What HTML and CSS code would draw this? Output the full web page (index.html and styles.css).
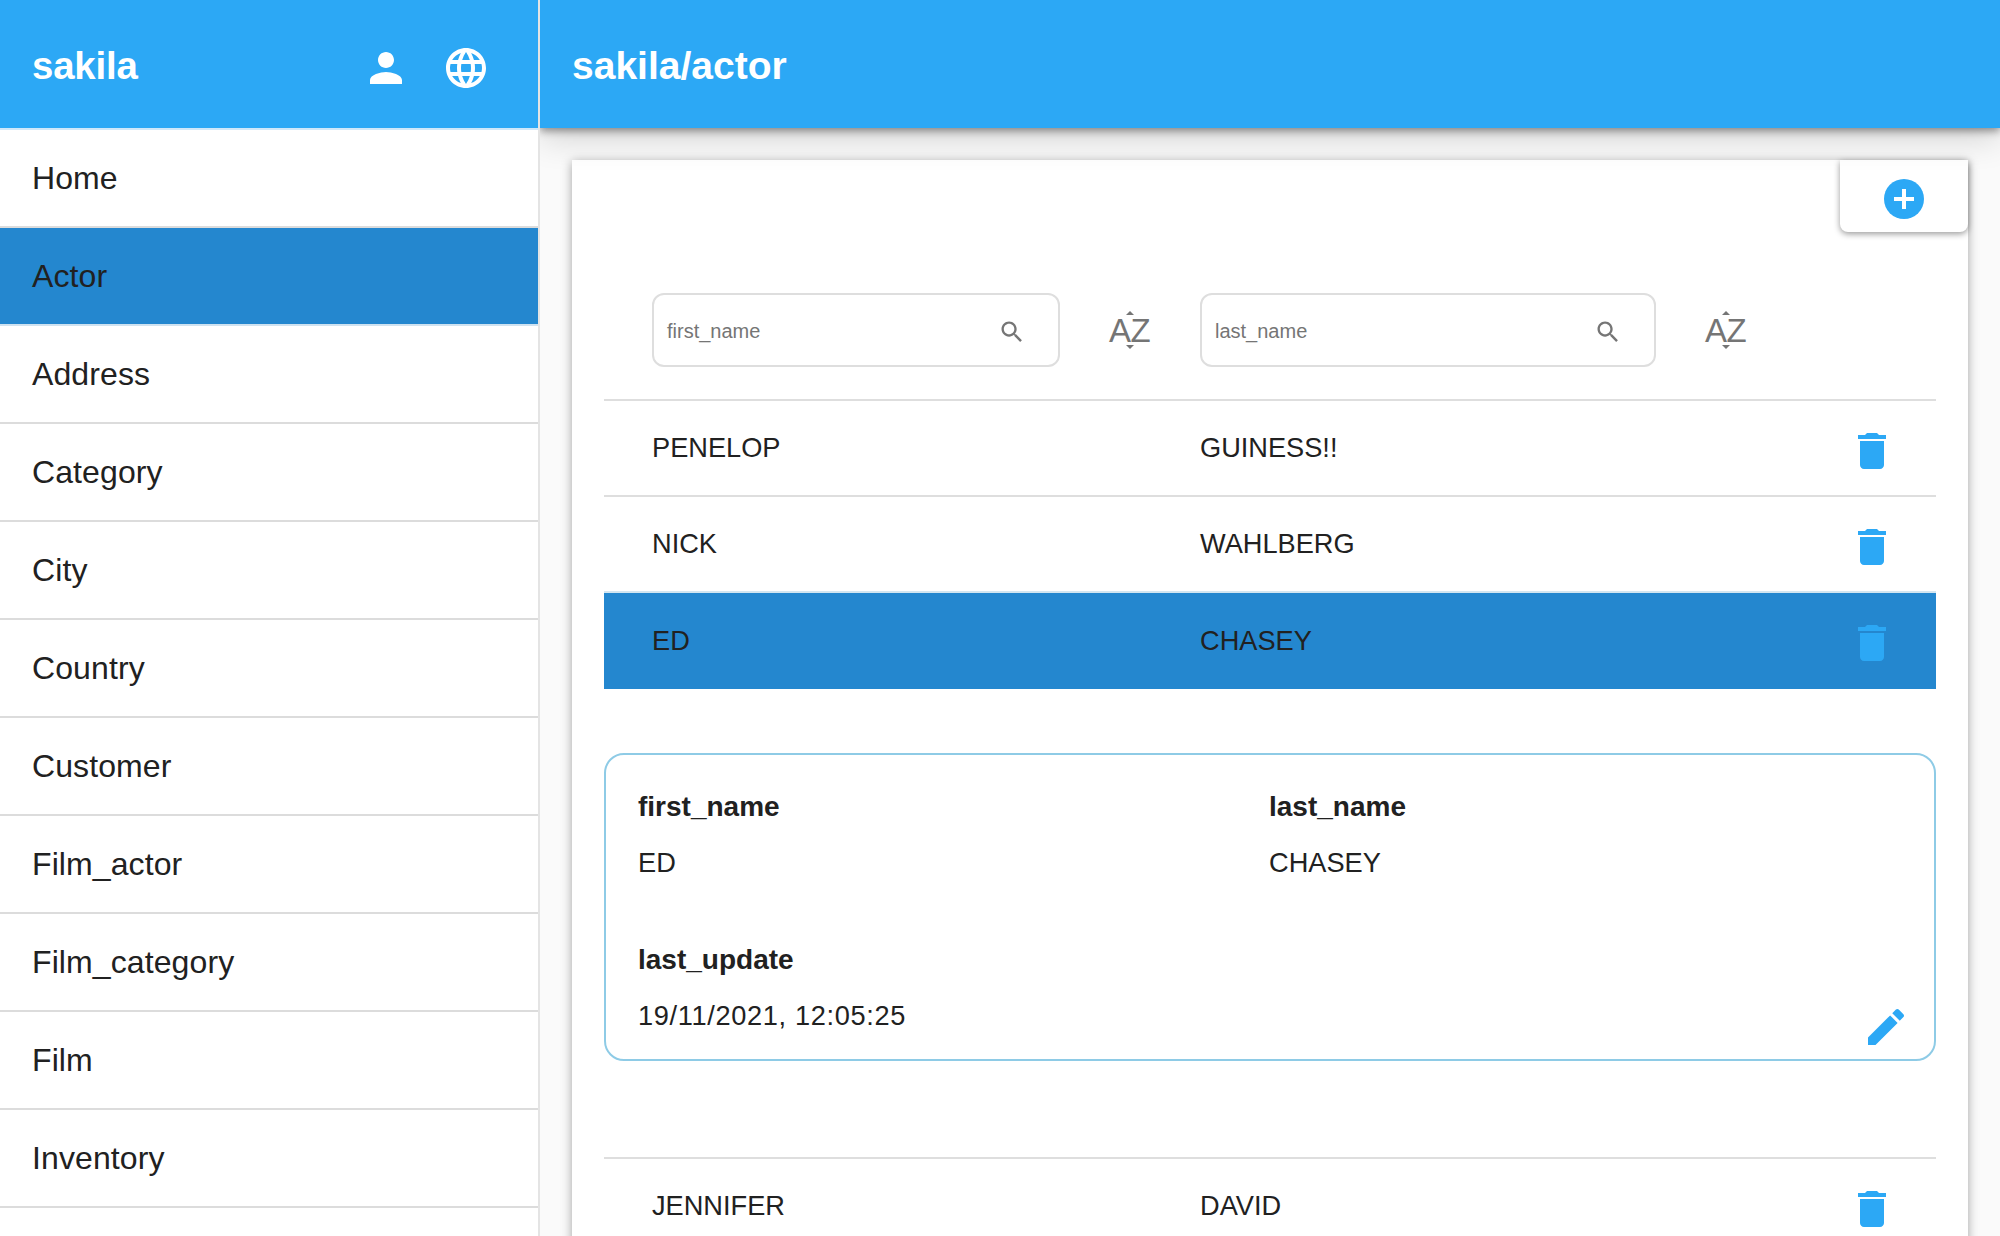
FILE: index.html
```html
<!DOCTYPE html>
<html lang="en">
<head>
<meta charset="utf-8">
<title>sakila/actor</title>
<link rel="stylesheet" href="styles.css">
</head>
<body>
<svg class="sprite" width="0" height="0" aria-hidden="true">
  <symbol id="i-person" viewBox="0 0 24 24"><path d="M12 12c2.21 0 4-1.79 4-4s-1.79-4-4-4-4 1.79-4 4 1.79 4 4 4zm0 2c-2.67 0-8 1.34-8 4v2h16v-2c0-2.66-5.33-4-8-4z"/></symbol>
  <symbol id="i-globe" viewBox="0 0 24 24"><path d="M11.99 2C6.47 2 2 6.48 2 12s4.47 10 9.99 10C17.52 22 22 17.52 22 12S17.52 2 11.99 2zm6.93 6h-2.95c-.32-1.25-.78-2.45-1.38-3.56 1.84.63 3.37 1.91 4.33 3.56zM12 4.04c.83 1.2 1.48 2.53 1.91 3.96h-3.82c.43-1.43 1.08-2.76 1.91-3.96zM4.26 14C4.1 13.36 4 12.69 4 12s.1-1.36.26-2h3.38c-.08.66-.14 1.32-.14 2 0 .68.06 1.34.14 2H4.26zm.82 2h2.95c.32 1.25.78 2.45 1.38 3.56-1.84-.63-3.37-1.9-4.33-3.56zm2.95-8H5.08c.96-1.66 2.49-2.93 4.33-3.56C8.81 5.55 8.35 6.75 8.03 8zM12 19.96c-.83-1.2-1.48-2.53-1.91-3.96h3.82c-.43 1.43-1.08 2.76-1.91 3.96zM14.34 14H9.66c-.09-.66-.16-1.32-.16-2 0-.68.07-1.35.16-2h4.68c.09.65.16 1.32.16 2 0 .68-.07 1.34-.16 2zm.25 5.56c.6-1.11 1.06-2.31 1.38-3.56h2.95c-.96 1.65-2.49 2.93-4.33 3.56zM16.36 14c.08-.66.14-1.32.14-2 0-.68-.06-1.34-.14-2h3.38c.16.64.26 1.31.26 2s-.1 1.36-.26 2h-3.38z"/></symbol>
  <symbol id="i-search" viewBox="0 0 24 24"><path d="M15.5 14h-.79l-.28-.27C15.41 12.59 16 11.11 16 9.5 16 5.91 13.09 3 9.5 3S3 5.91 3 9.5 5.91 16 9.5 16c1.61 0 3.09-.59 4.23-1.57l.27.28v.79l5 4.99L20.49 19l-4.99-5zm-6 0C7.01 14 5 11.99 5 9.5S7.01 5 9.5 5 14 7.01 14 9.5 11.99 14 9.5 14z"/></symbol>
  <symbol id="i-trash" viewBox="0 0 24 24"><path d="M6 19c0 1.1.9 2 2 2h8c1.1 0 2-.9 2-2V7H6v12zM19 4h-3.5l-1-1h-5l-1 1H5v2h14V4z"/></symbol>
  <symbol id="i-edit" viewBox="0 0 24 24"><path d="M3 17.25V21h3.75L17.81 9.94l-3.75-3.75L3 17.25zM20.71 7.04c.39-.39.39-1.02 0-1.41l-2.34-2.34c-.39-.39-1.02-.39-1.41 0l-1.83 1.83 3.75 3.75 1.83-1.83z"/></symbol>
</svg>

<div class="app">
  <aside class="sidebar">
    <div class="brand">
      <span class="brand-name">sakila</span>
      <div class="brand-icons">
        <svg class="icon icon-48"><use href="#i-person"/></svg>
        <svg class="icon icon-48"><use href="#i-globe"/></svg>
      </div>
    </div>
    <nav class="nav">
      <a class="nav-item">Home</a>
      <a class="nav-item nav-item-active">Actor</a>
      <a class="nav-item">Address</a>
      <a class="nav-item">Category</a>
      <a class="nav-item">City</a>
      <a class="nav-item">Country</a>
      <a class="nav-item">Customer</a>
      <a class="nav-item">Film_actor</a>
      <a class="nav-item">Film_category</a>
      <a class="nav-item">Film</a>
      <a class="nav-item">Inventory</a>
    </nav>
  </aside>

  <main class="main">
    <header class="topbar">sakila/actor</header>
    <section class="card">
      <div class="card-actions">
        <button class="add-btn" type="button" aria-label="Add">
          <svg class="add-glyph" viewBox="0 0 40 40"><circle cx="20" cy="20" r="20"/><path class="add-cross" d="M18 10h4v8h8v4h-8v8h-4v-8h-8v-4h8z"/></svg>
        </button>
      </div>

      <div class="filters">
        <div class="filter">
          <div class="search search-first">
            <span class="search-label">first_name</span>
            <svg class="icon search-icon"><use href="#i-search"/></svg>
          </div>
          <div class="sort">
            <span class="sort-up"></span>
            <span class="sort-text">AZ</span>
            <span class="sort-down"></span>
          </div>
        </div>
        <div class="filter">
          <div class="search search-last">
            <span class="search-label">last_name</span>
            <svg class="icon search-icon"><use href="#i-search"/></svg>
          </div>
          <div class="sort">
            <span class="sort-up"></span>
            <span class="sort-text">AZ</span>
            <span class="sort-down"></span>
          </div>
        </div>
      </div>

      <div class="row">
        <span>PENELOP</span><span>GUINESS!!</span>
        <svg class="icon icon-48 row-trash"><use href="#i-trash"/></svg>
      </div>
      <div class="row">
        <span>NICK</span><span>WAHLBERG</span>
        <svg class="icon icon-48 row-trash"><use href="#i-trash"/></svg>
      </div>
      <div class="row row-selected">
        <span>ED</span><span>CHASEY</span>
        <svg class="icon icon-48 row-trash"><use href="#i-trash"/></svg>
      </div>

      <div class="detail">
        <div class="field">
          <div class="field-label">first_name</div>
          <div class="field-value">ED</div>
        </div>
        <div class="field">
          <div class="field-label">last_name</div>
          <div class="field-value">CHASEY</div>
        </div>
        <div class="field">
          <div class="field-label">last_update</div>
          <div class="field-value field-date">19/11/2021, 12:05:25</div>
        </div>
        <svg class="icon icon-48 detail-edit"><use href="#i-edit"/></svg>
      </div>

      <div class="row row-after">
        <span>JENNIFER</span><span>DAVID</span>
        <svg class="icon icon-48 row-trash"><use href="#i-trash"/></svg>
      </div>
    </section>
  </main>
</div>
</body>
</html>
```

FILE: styles.css
```css
* { box-sizing: border-box; }

html, body {
  margin: 0;
  height: 100%;
  overflow: hidden;
}

body {
  font-family: "Liberation Sans", Arial, sans-serif;
  color: #212121;
  background: #fafafa;
}

.sprite { position: absolute; }

.icon { fill: currentColor; display: block; flex: none; }
.icon-48 { width: 48px; height: 48px; }

.app {
  display: grid;
  grid-template-columns: 540px 1fr;
  height: 1236px;
  overflow: hidden;
}

/* Sidebar */
.sidebar {
  background: #fff;
  border-right: 2px solid #e4e4e4;
  overflow: hidden;
}

.brand {
  height: 130px;
  display: flex;
  align-items: center;
  justify-content: space-between;
  padding: 4px 48px 0 32px;
  background: #2ca8f5;
  border-bottom: 2px solid #cfe8fa;
  color: #fff;
}

.brand-name {
  font-size: 38.4px;
  font-weight: 700;
  letter-spacing: -.2px;
}

.brand-icons {
  display: flex;
  gap: 32px;
  margin-top: 3px;
}

.nav { display: flex; flex-direction: column; }

.nav-item {
  height: 98px;
  flex: none;
  display: flex;
  align-items: center;
  padding: 0 32px;
  font-size: 32px;
  letter-spacing: .1px;
  border-bottom: 2px solid #dcdcdc;
}

.nav-item-active {
  background: #2487cf;
  border-bottom-color: #cfe2f0;
}

/* Main */
.main {
  min-width: 0;
  overflow: hidden;
  background: #fafafa;
}

.topbar {
  position: relative;
  z-index: 2;
  height: 128px;
  display: flex;
  align-items: center;
  padding: 4px 32px 0;
  background: #2ca8f5;
  color: #fff;
  font-size: 39px;
  font-weight: 700;
  box-shadow: 0 3px 8px rgba(0, 0, 0, .4), 0 10px 32px rgba(0, 0, 0, .16);
}

.card {
  margin: 32px 32px 0;
  padding: 0 32px 32px;
  background: #fff;
  box-shadow: 0 2px 10px rgba(0, 0, 0, .35);
}

.card-actions {
  display: flex;
  justify-content: flex-end;
  margin-right: -32px;
}

.add-btn {
  width: 128px;
  height: 72px;
  padding: 5px 0 0;
  border: 0;
  border-radius: 0 0 8px 8px;
  background: #fff;
  display: flex;
  align-items: center;
  justify-content: center;
  box-shadow: 0 2px 6px rgba(0, 0, 0, .4);
}

.add-glyph { width: 40px; height: 40px; fill: #2ca8f5; display: block; }
.add-cross { fill: #fff; }

.filters {
  display: grid;
  grid-template-columns: 548px 1fr;
  padding-left: 48px;
  margin-top: 61px;
  padding-bottom: 32px;
}

.filter {
  display: flex;
  align-items: center;
  gap: 50px;
}

.search {
  height: 74px;
  display: flex;
  align-items: center;
  justify-content: space-between;
  padding: 2px 32px 0 13px;
  border: 2px solid #dedede;
  border-radius: 12px;
  color: #757575;
}

.search-first { width: 408px; }
.search-last { width: 456px; }

.search-label { font-size: 20px; }

.search-icon { width: 28px; height: 28px; margin-top: 2px; }

.filter .sort { margin-left: -1px; }

.sort {
  position: relative;
  width: 42px;
  height: 38px;
  color: #757575;
}

.sort-text {
  position: absolute;
  left: 0;
  top: 3px;
  font-size: 33px;
  line-height: 34px;
  letter-spacing: -.5px;
}

.sort-up, .sort-down {
  position: absolute;
  left: 17px;
  width: 0;
  height: 0;
  border-left: 4px solid transparent;
  border-right: 4px solid transparent;
}

.sort-up { top: 0; border-bottom: 4px solid #757575; }
.sort-down { bottom: 0; border-top: 4px solid #757575; }

.row {
  height: 96px;
  display: grid;
  grid-template-columns: 548px 1fr 48px;
  align-items: center;
  padding: 0 40px 0 48px;
  border-top: 2px solid #dedede;
  font-size: 27.2px;
}

.row-trash { color: #2ca8f5; margin-top: 6px; }

.row-selected {
  height: 98px;
  background: #2487cf;
  background-clip: padding-box;
  border-top-color: #d3e6f1;
}

.row-selected .row-trash { margin-top: 4px; }

.row-after { margin-top: 96px; }

.detail {
  position: relative;
  height: 308px;
  margin-top: 64px;
  padding: 36px 32px 0;
  border: 2px solid #8ecbe6;
  border-radius: 20px;
  display: grid;
  grid-template-columns: 631px 1fr;
  grid-auto-rows: 89px;
  row-gap: 64px;
}

.field { display: flex; flex-direction: column; gap: 24px; }

.field-label,
.field-value {
  line-height: 32px;
}

.field-label { font-size: 28px; font-weight: 700; }
.field-value { font-size: 27.2px; }
.field-date { letter-spacing: .65px; }

.detail-edit {
  position: absolute;
  right: 24px;
  bottom: 8px;
  color: #2ca8f5;
}
```
